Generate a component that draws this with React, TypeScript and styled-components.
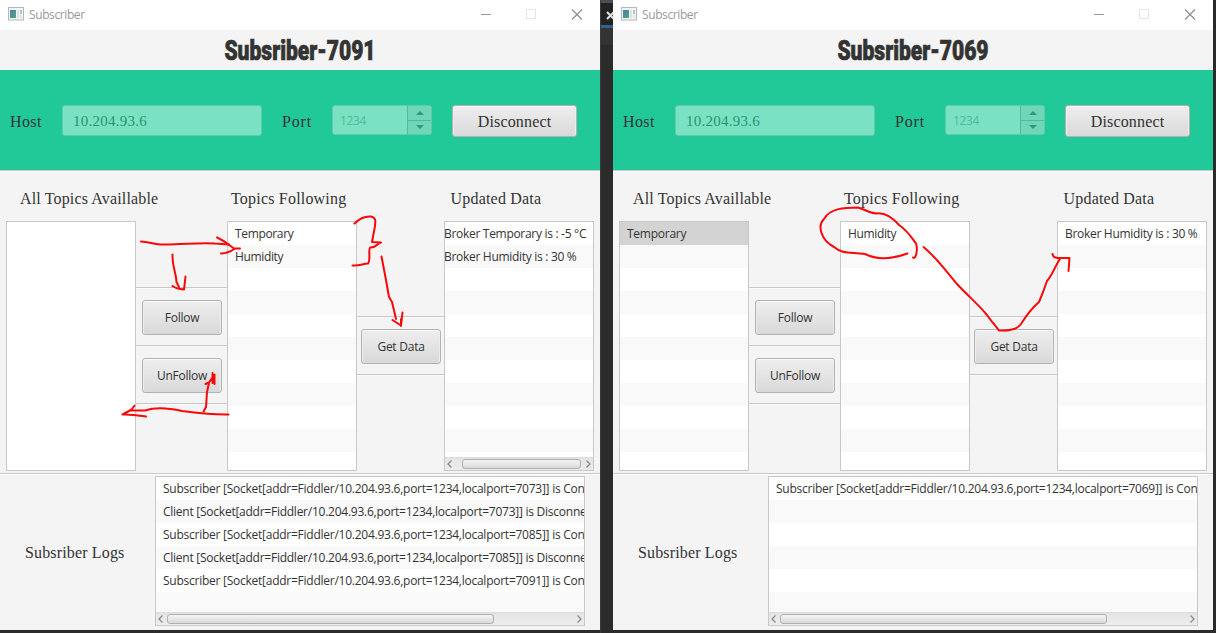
import React from "react";
import styled, { createGlobalStyle } from "styled-components";

const Global = createGlobalStyle`
  * { box-sizing: border-box; }
  body { margin: 0; background: #2b2b2b; overflow: hidden; }
`;

const ui = `"Open Sans", "Noto Sans", sans-serif`;
const serif = `"Liberation Serif", serif`;

const Desktop = styled.div`
  position: relative;
  display: flex;
  width: 1216px;
  height: 633px;
  background: #2b2b2b;
  overflow: hidden;
`;
const Backdrop = styled.div`
  width: 13px;
  height: 633px;
  flex: none;
  border-left: 1px solid #3c3c3c;
`;
const BackdropStrip = styled.div<{ $h: number; $c: string }>`
  height: ${(p) => p.$h}px;
  background: ${(p) => p.$c};
`;
const TabClose = styled.svg`
  display: block;
  width: 12px;
  height: 22px;
`;
const Frame = styled.section`
  width: 600px;
  height: 630px;
  flex: none;
  display: flex;
  flex-direction: column;
  background: #f4f4f4;
  color: #333;
`;
const TitleBar = styled.header`
  height: 30px;
  flex: none;
  display: flex;
  align-items: center;
  padding-left: 8px;
  background: #fff;
  font: 12px/30px ${ui};
  color: #999;
`;
const AppIcon = styled.svg`
  width: 16px;
  height: 14px;
  margin: 0 5px 2px 0;
`;
const Caption = styled.span`
  flex: 1;
  letter-spacing: -0.4px;
`;
const Controls = styled.svg`
  width: 120px;
  height: 30px;
`;
const Heading = styled.h1`
  height: 40px;
  flex: none;
  margin: 0;
  text-align: center;
  font: 900 27px/43px Roboto, sans-serif;
  color: #333;
  transform: scaleX(0.78);
  white-space: nowrap;
  -webkit-text-stroke: 0.7px #333;
`;
const Connection = styled.div`
  height: 100px;
  flex: none;
  display: flex;
  padding: 35px 0 0 10px;
  background: #22c998;
`;
const FieldLabel = styled.label<{ $w: number; $ls: number }>`
  width: ${(p) => p.$w}px;
  font: 16px/33px ${serif};
  letter-spacing: ${(p) => p.$ls}px;
`;
const HostField = styled.div`
  width: 200px;
  height: 31px;
  margin-right: 20px;
  padding-left: 10px;
  border: 1px solid #5dccaa;
  border-radius: 3px;
  background: #7ae2c3;
  color: #27936f;
  font: 15px/31px ${serif};
  letter-spacing: 0.25px;
`;
const Spinner = styled.div`
  width: 100px;
  height: 30px;
  margin-right: 20px;
  display: flex;
  border: 1px solid #5dccaa;
  border-radius: 3px;
  background: #7ae2c3;
  color: #54b899;
  font: 12px/30px ${ui};
`;
const SpinnerValue = styled.span`
  flex: 1;
  padding-left: 7px;
  letter-spacing: -0.4px;
`;
const SpinnerButtons = styled.div`
  width: 24px;
  display: flex;
  flex-direction: column;
  border-left: 1px solid #53bb9b;
  background: #6fd7b8;
`;
const SpinnerButton = styled.div`
  flex: 1;
  display: grid;
  place-items: center;
  & + & { border-top: 1px solid #53bb9b; }
  svg { display: block; }
`;
const Button = styled.button<{ $w: number; $h: number }>`
  width: ${(p) => p.$w}px;
  height: ${(p) => p.$h}px;
  padding: 0;
  border: 1px solid #b2b2b2;
  border-radius: 3px;
  background: linear-gradient(#eeeeee, #d9d9d9);
  box-shadow: inset 0 1px 0 #fafafa, inset 1px 0 0 #ececec, inset -1px 0 0 #ececec;
  color: #333;
  font: 12px/1 ${ui};
  letter-spacing: -0.25px;
`;
const Disconnect = styled(Button)`
  padding-top: 1px;
  font: 16px/1 ${serif};
  letter-spacing: 0.15px;
`;
const Rule = styled.div`
  height: 2px;
  flex: none;
  border-top: 1px solid #c8c8c8;
  background: #fff;
`;
const Main = styled.main`
  height: 301px;
  flex: none;
  display: grid;
  grid-template-columns: 130px 91px 130px 87px 150px;
  grid-template-rows: 49px 250px;
  padding-left: 6px;
`;
const ColumnTitle = styled.h2<{ $pad: number; $ls?: number }>`
  margin: 0;
  padding-left: ${(p) => p.$pad}px;
  font: 400 16px/53px ${serif};
  letter-spacing: ${(p) => p.$ls ?? 0.2}px;
  white-space: nowrap;
`;
const List = styled.div<{ $w: number; $h: number; $plain?: boolean }>`
  width: ${(p) => p.$w}px;
  height: ${(p) => p.$h}px;
  display: flex;
  flex-direction: column;
  border: 1px solid #c8c8c8;
  background: ${(p) =>
    p.$plain ? "#fff" : "repeating-linear-gradient(#fff 0 23px, #f9f9f9 23px 46px)"};
  overflow: hidden;
`;
const Rows = styled.div`
  flex: 1;
  min-height: 0;
  overflow: hidden;
`;
const Row = styled.div<{ $selected?: boolean; $pad?: number; $ls?: number }>`
  height: 23px;
  padding-left: ${(p) => p.$pad ?? 7}px;
  background: ${(p) => (p.$selected ? "#d3d3d3" : "transparent")};
  font: 12px/24px ${ui};
  letter-spacing: ${(p) => p.$ls ?? -0.25}px;
  white-space: nowrap;
`;
const ScrolledRow = styled(Row)`
  margin-left: -1px;
`;
const ScrollTrack = styled.div`
  height: 13px;
  flex: none;
  display: flex;
  align-items: center;
  background: linear-gradient(#dcdcdc, #e6e6e6 20%, #ededed);
`;
const ScrollThumb = styled.div<{ $left: number; $w: number }>`
  width: ${(p) => p.$w}px;
  height: 10px;
  margin-left: ${(p) => p.$left}px;
  margin-right: auto;
  border: 1px solid #b0b0b0;
  border-radius: 3px;
  background: linear-gradient(#f4f4f4, #dadada);
`;
const Actions = styled.div<{ $top: number }>`
  padding-top: ${(p) => p.$top}px;
`;
const ActionCell = styled.div<{ $pad: number }>`
  height: 58px;
  padding: 12px 0 0 ${(p) => p.$pad}px;
  border-top: 1px solid #c8c8c8;
  box-shadow: inset 0 1px 0 #fafafa;
`;
const ActionEnd = styled.div`
  height: 2px;
  border-top: 1px solid #c8c8c8;
  background: #fafafa;
`;
const Logs = styled.footer`
  flex: 1;
  display: flex;
  padding-top: 1px;
`;
const LogsTitle = styled.h2`
  width: 155px;
  margin: 0;
  padding-left: 25px;
  font: 400 16px/153px ${serif};
  letter-spacing: 0.15px;
`;
const Annotations = styled.svg`
  position: absolute;
  left: 0;
  top: 0;
  pointer-events: none;
`;

const Chevron = ({ right }: { right?: boolean }) => (
  <svg width="12" height="12" viewBox="0 0 12 12">
    <path
      d={right ? "M5.500 2.500 9 6 5.500 9.500" : "M6.500 2.500 3 6l3.500 3.500"}
      fill="none"
      stroke="#8a8a8a"
      strokeWidth="1.300"
    />
  </svg>
);

const ScrollBar = ({ left, width }: { left: number; width: number }) => (
  <ScrollTrack>
    <Chevron />
    <ScrollThumb $left={left} $w={width} />
    <Chevron right />
  </ScrollTrack>
);

type WindowProps = {
  name: string;
  available: string[];
  following: string[];
  data: string[];
  dataScrolled?: boolean;
  logs: string[];
};

const SubscriberWindow = ({ name, available, following, data, dataScrolled, logs }: WindowProps) => (
  <Frame>
    <TitleBar>
      <AppIcon viewBox="0 0 16 14">
        <defs>
          <linearGradient id={`icon${name}`} x1="0" y1="0" x2="1" y2="1">
            <stop offset="0" stopColor="#4a7fb0" />
            <stop offset="1" stopColor="#4fa878" />
          </linearGradient>
        </defs>
        <rect x=".5" y=".5" width="15" height="12.5" fill="#f3f4f6" stroke="#b4b7bd" />
        <rect x="2" y="3" width="6" height="8" fill={`url(#icon${name})`} />
        <rect x="9" y="3" width="2" height="8" fill="#dfe1e4" />
        <rect x="12" y="3" width="2" height="4" fill="#a9cbd0" />
        <rect x="12" y="8" width="2" height="3" fill="#e4e6e8" />
      </AppIcon>
      <Caption>Subscriber</Caption>
      <Controls viewBox="0 0 120 30" fill="none">
        <path d="M1 14.500h10" stroke="#999" />
        <rect x="46.500" y="9.500" width="9" height="9" stroke="#e4e4e4" />
        <path d="M92 9.500l10 10M102 9.500l-10 10" stroke="#8c8c8c" strokeWidth="1.100" />
      </Controls>
    </TitleBar>
    <Heading>{name}</Heading>
    <Connection>
      <FieldLabel $w={52} $ls={0.4}>Host</FieldLabel>
      <HostField>10.204.93.6</HostField>
      <FieldLabel $w={50} $ls={0.8}>Port</FieldLabel>
      <Spinner>
        <SpinnerValue>1234</SpinnerValue>
        <SpinnerButtons>
          <SpinnerButton>
            <svg width="8" height="4"><path d="M0 4 4 0l4 4z" fill="#31997a" /></svg>
          </SpinnerButton>
          <SpinnerButton>
            <svg width="8" height="4"><path d="M0 0h8L4 4z" fill="#31997a" /></svg>
          </SpinnerButton>
        </SpinnerButtons>
      </Spinner>
      <Disconnect $w={125} $h={32}>Disconnect</Disconnect>
    </Connection>
    <Rule />
    <Main>
      <ColumnTitle $pad={14} $ls={0.15}>All Topics Availlable</ColumnTitle>
      <span />
      <ColumnTitle $pad={4}>Topics Following</ColumnTitle>
      <span />
      <ColumnTitle $pad={6.5}>Updated Data</ColumnTitle>
      <List $w={130} $h={250} $plain={available.length === 0}>
        {available.map((t) => <Row key={t} $selected>{t}</Row>)}
      </List>
      <Actions $top={66}>
        <ActionCell $pad={6}><Button $w={80} $h={35}>Follow</Button></ActionCell>
        <ActionCell $pad={6}><Button $w={80} $h={35}>UnFollow</Button></ActionCell>
        <ActionEnd />
      </Actions>
      <List $w={130} $h={250}>
        {following.map((t) => <Row key={t} $ls={-0.35}>{t}</Row>)}
      </List>
      <Actions $top={95}>
        <ActionCell $pad={4}><Button $w={80} $h={35}>Get Data</Button></ActionCell>
        <ActionEnd />
      </Actions>
      <List $w={150} $h={250}>
        <Rows>
          {data.map((t) =>
            dataScrolled ? (
              <ScrolledRow key={t} $pad={0} $ls={-0.3}>{t}</ScrolledRow>
            ) : (
              <Row key={t} $ls={-0.3}>{t}</Row>
            ),
          )}
        </Rows>
        {dataScrolled && <ScrollBar left={5} width={120} />}
      </List>
    </Main>
    <Rule />
    <Logs>
      <LogsTitle>Subsriber Logs</LogsTitle>
      <List $w={430} $h={150}>
        <Rows>
          {logs.map((t) => <Row key={t}>{t}</Row>)}
        </Rows>
        <ScrollBar left={-1} width={327} />
      </List>
    </Logs>
  </Frame>
);

const con = (p: number) => `Subscriber [Socket[addr=Fiddler/10.204.93.6,port=1234,localport=${p}]] is Con`;
const dis = (p: number) => `Client [Socket[addr=Fiddler/10.204.93.6,port=1234,localport=${p}]] is Disconne`;

export default function App() {
  return (
    <Desktop>
      <Global />
      <SubscriberWindow
        name="Subsriber-7091"
        available={[]}
        following={["Temporary", "Humidity"]}
        data={["Broker Temporary is : -5 °C", "Broker Humidity is : 30 %"]}
        dataScrolled
        logs={[con(7073), dis(7073), con(7085), dis(7085), con(7091)]}
      />
      <Backdrop>
        <BackdropStrip $h={3} $c="#4b5052" />
        <BackdropStrip $h={22} $c="#232323">
          <TabClose viewBox="0 0 12 22">
            <path d="M6 9l7 7M13 9l-7 7" stroke="#ddd" strokeWidth="2.200" />
          </TabClose>
        </BackdropStrip>
        <BackdropStrip $h={3} $c="#2d6391" />
        <BackdropStrip $h={17} $c="#333" />
      </Backdrop>
      <SubscriberWindow
        name="Subsriber-7069"
        available={["Temporary"]}
        following={["Humidity"]}
        data={["Broker Humidity is : 30 %"]}
        logs={[con(7069)]}
      />
      <Annotations width="1216" height="633" viewBox="0 0 1216 633" fill="none" stroke="#f80808" strokeWidth="2" strokeLinecap="round" strokeLinejoin="round">
        <path d="M141 241.500C150 241.500 153 245 162 244.500C180 245 200 242 215 243.500L229 244.500" />
        <path d="M217 237.500C225 241 228 244.500 234 248.500H240M240 248.500H235C230 252 227 253.500 221 253.500" />
        <path d="M172.500 254.500C172 267 176 271 176.500 282L179 287M172.500 286C175 288 178 289 184 289.500L185.500 276.500" />
        <path d="M354.500 223.500C360 218 366 216 371 216.500C377 218 375 222 375 226L372 242L381 242.500C376 244 377 248 370 247.500C368 250 371 260 368 263.500C362 264 360 266 352.500 265.500" />
        <path d="M381.500 256.500L386 280L389 297L392 302L396 319M392.500 320L401 325.500L402.500 312.500M401 326V319" />
        <path d="M228.500 414.500C213 415 198 413 182 411C164 407 151 408.500 145 410.500H130L122.500 414.500C132 414 139 415.500 146 416.500M122.500 414.500L132 409L134.500 405.500" />
        <path d="M203.500 411.500L206 407L207 392L209 383M205.500 384L209 382.500L214.500 374.500V384M212.500 373V383" />
        <path d="M907.500 253.500C892 259 877 260 865 254C850 252 842 254 834 247C821 240 817 226 824 219C830 208 845 207.500 858 207.500C866 210 870 213 876 213.500C885 212 892 217 899 225C908 231 911 237 916 243.500C918 249 916 260 913 257.500" />
        <path d="M923.500 247C936 257 946 271 957 284C968 296 978 304 987 315C991 321 996 326 999 330.500C1009 331 1017 330 1021 324C1026 316 1032 308 1039 302C1042 295 1044 290 1047 281C1053 274 1055 266 1060 259M1052.500 254C1053 257 1054 257.500 1058 258H1069.500L1068.500 271" />
      </Annotations>
    </Desktop>
  );
}
